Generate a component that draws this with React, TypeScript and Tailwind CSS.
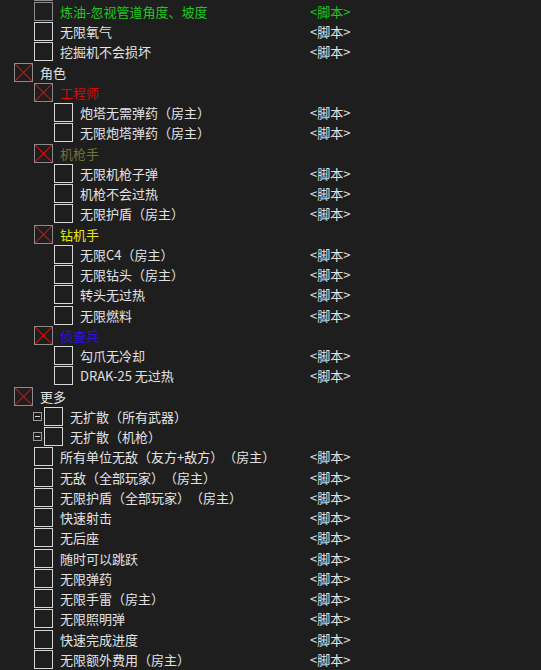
import React from "react";

type Row = {
  label: string;
  level: 0 | 1 | 2;
  checked?: boolean;
  color?: string;
  script?: boolean;
  tree?: boolean;
  dimBox?: boolean;
};

const ROWS: Row[] = [
  { label: "", level: 1, dimBox: true },
  { label: "炼油-忽视管道角度、坡度", level: 1, color: "text-[#1ec81e]", script: true, dimBox: true },
  { label: "无限氧气", level: 1, script: true },
  { label: "挖掘机不会损坏", level: 1, script: true },
  { label: "角色", level: 0, checked: true },
  { label: "工程师", level: 1, checked: true, color: "text-[#d40d0d]" },
  { label: "炮塔无需弹药（房主）", level: 2, script: true },
  { label: "无限炮塔弹药（房主）", level: 2, script: true },
  { label: "机枪手", level: 1, checked: true, color: "text-[#6f7437]" },
  { label: "无限机枪子弹", level: 2, script: true },
  { label: "机枪不会过热", level: 2, script: true },
  { label: "无限护盾（房主）", level: 2, script: true },
  { label: "钻机手", level: 1, checked: true, color: "text-[#e6e60c]" },
  { label: "无限C4（房主）", level: 2, script: true },
  { label: "无限钻头（房主）", level: 2, script: true },
  { label: "转头无过热", level: 2, script: true },
  { label: "无限燃料", level: 2, script: true },
  { label: "侦查兵", level: 1, checked: true, color: "text-[#3014d6]" },
  { label: "勾爪无冷却", level: 2, script: true },
  { label: "DRAK-25 无过热", level: 2, script: true },
  { label: "更多", level: 0, checked: true },
  { label: "无扩散（所有武器）", level: 1, tree: true },
  { label: "无扩散（机枪）", level: 1, tree: true },
  { label: "所有单位无敌（友方+敌方）（房主）", level: 1, script: true },
  { label: "无敌（全部玩家）（房主）", level: 1, script: true },
  { label: "无限护盾（全部玩家）（房主）", level: 1, script: true },
  { label: "快速射击", level: 1, script: true },
  { label: "无后座", level: 1, script: true },
  { label: "随时可以跳跃", level: 1, script: true },
  { label: "无限弹药", level: 1, script: true },
  { label: "无限手雷（房主）", level: 1, script: true },
  { label: "无限照明弹", level: 1, script: true },
  { label: "快速完成进度", level: 1, script: true },
  { label: "无限额外费用（房主）", level: 1, script: true },
];

const INDENT = ["w-[14px]", "w-[34px]", "w-[54px]"];

// rows are 20.25px apart in the list; keep each one on whole pixels
const rowHeight = (i: number) =>
  Math.floor((i + 1) * 20.25) - Math.floor(i * 20.25);

function CheckBox({ checked, dim }: { checked?: boolean; dim?: boolean }) {
  if (checked) {
    return (
      <div className="w-[19px] h-[19px] shrink-0 border border-[#8a8a8a] bg-[#1e1e1e]">
        <svg width="17" height="17" viewBox="0 0 17 17" className="block">
          <path d="M0 0L17 17M17 0L0 17" stroke="#d01010" strokeWidth="1.1" />
        </svg>
      </div>
    );
  }
  return (
    <div
      className={`w-[19px] h-[19px] shrink-0 border bg-[#1e1e1e] ${
        dim ? "border-[#8a8a8a]" : "border-[#d6d6d6]"
      }`}
    />
  );
}

function TreeToggle() {
  return (
    <div className="w-[9px] h-[9px] border border-[#9a9a9a] flex items-center justify-center shrink-0">
      <div className="w-[5px] h-px bg-[#cfcfcf]" />
    </div>
  );
}

export default function App() {
  return (
    <div
      className="w-[541px] h-[670px] overflow-hidden bg-[#1e1e1e] text-[13px] text-[#e2e2e2] [text-spacing-trim:space-all]"
      style={{ fontFamily: '"Noto Sans CJK SC", "Noto Sans", sans-serif' }}
    >
      <div className="-mt-[19px]">
        {ROWS.map((row, i) => (
          <div
            key={i}
            className={`${rowHeight(i) === 21 ? "h-[21px]" : "h-[20px]"} flex items-center relative`}
          >
            {row.tree ? (
              <>
                <div className="w-[33px] shrink-0" />
                <TreeToggle />
                <div className="w-[2px] shrink-0" />
                <CheckBox />
                <span className="ml-[7px] whitespace-nowrap leading-none">{row.label}</span>
              </>
            ) : (
              <>
                <div className={`${INDENT[row.level]} shrink-0`} />
                <CheckBox checked={row.checked} dim={row.dimBox} />
                <span className={`ml-[7px] whitespace-nowrap leading-none ${row.color ?? ""}`}>
                  {row.label}
                </span>
              </>
            )}
            {row.script && (
              <span
                className={`absolute left-[310px] whitespace-nowrap leading-none ${
                  row.color ?? ""
                }`}
              >
                &lt;脚本&gt;
              </span>
            )}
          </div>
        ))}
      </div>
    </div>
  );
}
